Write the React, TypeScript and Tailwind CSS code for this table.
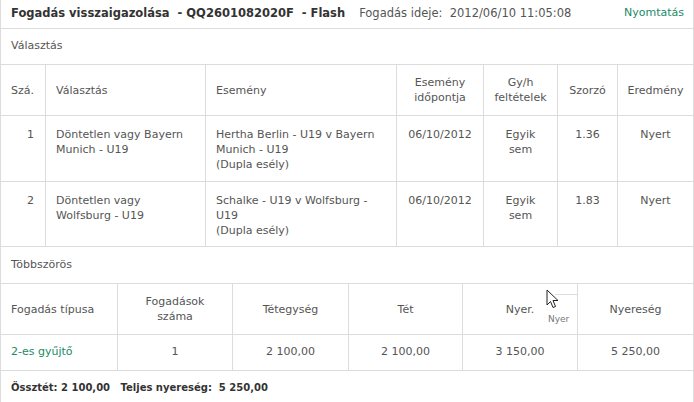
const cell = "border-r border-[#dcdcdc] px-[10px]";
const ccell = "border-r border-[#dcdcdc] px-[2px] text-center";

const selections = [
  {
    no: "1",
    pick: ["Döntetlen vagy Bayern", "Munich - U19"],
    event: ["Hertha Berlin - U19 v Bayern", "Munich - U19", "(Dupla esély)"],
    date: "06/10/2012",
    odds: "1.36",
    result: "Nyert",
  },
  {
    no: "2",
    pick: ["Döntetlen vagy", "Wolfsburg - U19"],
    event: ["Schalke - U19 v Wolfsburg -", "U19", "(Dupla esély)"],
    date: "06/10/2012",
    odds: "1.83",
    result: "Nyert",
  },
];

const grid1 = "grid grid-cols-[45px_160px_191px_87px_74px_60px_75px]";
const grid2 = "grid grid-cols-[117px_115px_116px_114px_115px_115px]";

function Cursor() {
  return (
    <svg
      className="absolute left-[545px] top-[289px]"
      width="14"
      height="21"
      viewBox="0 0 14 21"
    >
      <path
        d="M1 1 L1 16 L4.5 12.5 L7 18.5 L9.5 17.5 L7 11.5 L12 11.5 Z"
        fill="#fff"
        stroke="#222"
        strokeWidth="1"
        strokeLinejoin="round"
      />
    </svg>
  );
}

export default function App() {
  return (
    <div
      className="relative w-[694px] h-[402px] overflow-hidden bg-white border-x border-[#dcdcdc] text-[11px] text-[#555]"
      style={{ fontFamily: '"DejaVu Sans", Verdana, sans-serif' }}
    >
      {/* title bar */}
      <div className="flex h-[29px] items-center border-b border-[#dcdcdc] pl-[10px] pr-[9px] pb-[1px]">
        <span className="text-[11.5px] font-bold text-[#333] whitespace-pre">
          Fogadás visszaigazolása  - QQ2601082020F  - Flash
        </span>
        <span className="ml-[14px] text-[11.5px] whitespace-pre">
          Fogadás ideje:  2012/06/10 11:05:08
        </span>
        <span className="ml-auto text-[#1b8a68]">Nyomtatás</span>
      </div>

      <div className="flex h-[36px] items-center border-b border-[#dcdcdc] pl-[10px]">
        Választás
      </div>

      {/* selections header */}
      <div className={`${grid1} h-[51px] border-b border-[#dcdcdc] leading-[15px]`}>
        <div className={`${cell} flex items-center`}>Szá.</div>
        <div className={`${cell} flex items-center`}>Választás</div>
        <div className={`${cell} flex items-center`}>Esemény</div>
        <div className={`${ccell} flex items-center justify-center`}>
          Esemény
          <br />
          időpontja
        </div>
        <div className={`${ccell} flex items-center justify-center`}>
          Gy/h
          <br />
          feltételek
        </div>
        <div className={`${ccell} flex items-center justify-center`}>Szorzó</div>
        <div className="flex items-center justify-center">Eredmény</div>
      </div>

      {selections.map((s, i) => (
        <div
          key={s.no}
          className={`${grid1} ${i === 0 ? "h-[66px]" : "h-[65px]"} border-b border-[#dcdcdc] leading-[15px]`}
        >
          <div className={`${cell} text-right pr-[11px] pt-[11px]`}>{s.no}</div>
          <div className={`${cell} pt-[11px]`}>
            {s.pick.map((l) => (
              <div key={l}>{l}</div>
            ))}
          </div>
          <div className={`${cell} pt-[11px]`}>
            {s.event.map((l) => (
              <div key={l}>{l}</div>
            ))}
          </div>
          <div className={`${ccell} pt-[11px]`}>{s.date}</div>
          <div className={`${ccell} pt-[11px]`}>
            Egyik
            <br />
            sem
          </div>
          <div className={`${ccell} pt-[11px]`}>{s.odds}</div>
          <div className="text-center pt-[11px]">{s.result}</div>
        </div>
      ))}

      <div className="flex h-[37px] items-center border-b border-[#dcdcdc] pl-[10px]">
        Többszörös
      </div>

      {/* multiples */}
      <div className={`${grid2} h-[51px] border-b border-[#dcdcdc] leading-[15px]`}>
        <div className={`${cell} flex items-center`}>Fogadás típusa</div>
        <div className={`${ccell} flex items-center justify-center`}>
          Fogadások
          <br />
          száma
        </div>
        <div className={`${ccell} flex items-center justify-center`}>Tétegység</div>
        <div className={`${ccell} flex items-center justify-center`}>Tét</div>
        <div className={`${ccell} flex items-center justify-center`}>Nyer.</div>
        <div className="flex items-center justify-center">Nyereség</div>
      </div>

      <div className={`${grid2} h-[36px] border-b border-[#dcdcdc]`}>
        <div className={`${cell} flex items-center text-[#1b8a68]`}>2-es gyűjtő</div>
        <div className={`${ccell} flex items-center justify-center`}>1</div>
        <div className={`${ccell} flex items-center justify-center`}>2 100,00</div>
        <div className={`${ccell} flex items-center justify-center`}>2 100,00</div>
        <div className={`${ccell} flex items-center justify-center`}>3 150,00</div>
        <div className="flex items-center justify-center">5 250,00</div>
      </div>

      <div className="flex h-[32px] items-center pl-[10px] text-[10px] font-bold text-[#333] whitespace-pre">
        Össztét: 2 100,00   Teljes nyereség:  5 250,00
      </div>

      {/* tooltip remnant + cursor */}
      <div className="absolute left-[554px] top-[294px] h-px w-[23px] bg-[#dcdcdc]" />
      <span className="absolute left-[547px] top-[314px] text-[9px] leading-[10px] text-[#777]">
        Nyer
      </span>
      <Cursor />
    </div>
  );
}
